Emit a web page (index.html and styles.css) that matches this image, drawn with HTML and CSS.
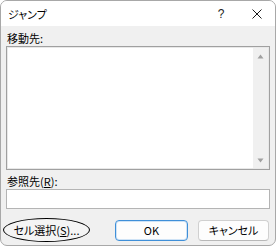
FILE: index.html
```html
<!DOCTYPE html>
<html lang="ja">
<head>
<meta charset="utf-8">
<link rel="stylesheet" href="styles.css">
</head>
<body>
<div class="window">
  <div class="titlebar">
    <span class="title">ジャンプ</span>
    <span class="tb-btn help">?</span>
    <span class="tb-btn close">
      <svg width="10" height="10" viewBox="0 0 10 10"><path d="M0.5 0.5L9.5 9.5M9.5 0.5L0.5 9.5" stroke="#1a1a1a" stroke-width="1"/></svg>
    </span>
  </div>
  <div class="content">
    <div class="label first">移動先:</div>
    <div class="listbox">
      <div class="list-area"></div>
      <div class="scrollbar">
        <svg width="7" height="5" viewBox="0 0 7 5"><path d="M3.5 0.5L6.5 4.5H0.5Z" fill="#a0a0a0"/></svg>
        <svg width="7" height="5" viewBox="0 0 7 5"><path d="M3.5 4.5L6.5 0.5H0.5Z" fill="#a0a0a0"/></svg>
      </div>
    </div>
    <div class="label">参照先(<u>R</u>):</div>
    <div class="input"></div>
    <div class="buttons">
      <div class="btn special">セル選択(<u>S</u>)...</div>
      <div class="btn ok">OK</div>
      <div class="btn cancel">キャンセル</div>
    </div>
  </div>
</div>
</body>
</html>
```

FILE: styles.css
```css
html, body {
  margin: 0;
  padding: 0;
  background: #ffffff;
}
body {
  width: 277px;
  height: 248px;
  font-family: "Noto Sans CJK JP", "Noto Sans", sans-serif;
  font-feature-settings: "palt";
  font-size: 11px;
  color: #000;
}
.window {
  width: 276px;
  height: 246px;
  box-sizing: border-box;
  border: 1px solid #a8a8a8;
  border-radius: 7px;
  overflow: hidden;
  background: #f0f0f0;
  display: flex;
  flex-direction: column;
}
.titlebar {
  height: 25px;
  background: #ffffff;
  display: flex;
  align-items: center;
  padding-left: 7px;
}
.title {
  flex: 1;
  font-size: 11px;
  padding-top: 1px;
}
.tb-btn {
  display: flex;
  align-items: center;
  justify-content: center;
  height: 25px;
}
.help {
  width: 36px;
  margin-left: 2px;
  font-family: "Liberation Sans", sans-serif;
  font-size: 12px;
  color: #222;
}
.close {
  width: 36px;
  margin-left: 0;
}
.content {
  flex: 1;
  padding: 0 5px 0 5px;
  display: flex;
  flex-direction: column;
}
.label {
  height: 15px;
  line-height: 15px;
  margin-top: 4px;
  padding-left: 1px;
}
.label.first {
  margin-top: 5px;
}
.label u {
  text-underline-offset: 1px;
}
.listbox {
  margin-top: 0;
  height: 124px;
  box-sizing: border-box;
  border: 1px solid #a0a0a0;
  box-shadow: inset 0 0 0 1px #e8e8e8;
  display: flex;
  background: #ffffff;
}
.list-area {
  flex: 1;
}
.scrollbar {
  width: 15px;
  margin: 1px 1px 1px 0;
  background: #f0f0f0;
  display: flex;
  flex-direction: column;
  justify-content: space-between;
  align-items: center;
  padding: 6px 0 5px;
}
.scrollbar svg {
  display: block;
}
.input {
  margin-top: 0;
  height: 20px;
  box-sizing: border-box;
  border: 1px solid #b4b4b4;
  background: #ffffff;
}
.buttons {
  display: flex;
  align-items: center;
  margin-top: 9px;
}
.btn {
  height: 21px;
  box-sizing: border-box;
  display: flex;
  align-items: center;
  justify-content: center;
  font-size: 11px;
}
.btn.special {
  width: 87px;
  height: 24px;
  margin-left: -3px;
  border: 1px solid #000;
  border-radius: 50%;
  background: #f4f4f4;
}
.btn.special u {
  text-underline-offset: 1px;
}
.btn.ok {
  width: 73px;
  margin-left: 25px;
  background: #fdfdfd;
  border: 1px solid #3f8fd8;
  box-shadow: inset 0 0 0 1px #cfe3f6;
  border-radius: 4px;
}
.btn.cancel {
  width: 71px;
  margin-left: 10px;
  background: #fdfdfd;
  border: 1px solid #d0d0d0;
  border-bottom-color: #b8b8b8;
  border-radius: 4px;
}
```
